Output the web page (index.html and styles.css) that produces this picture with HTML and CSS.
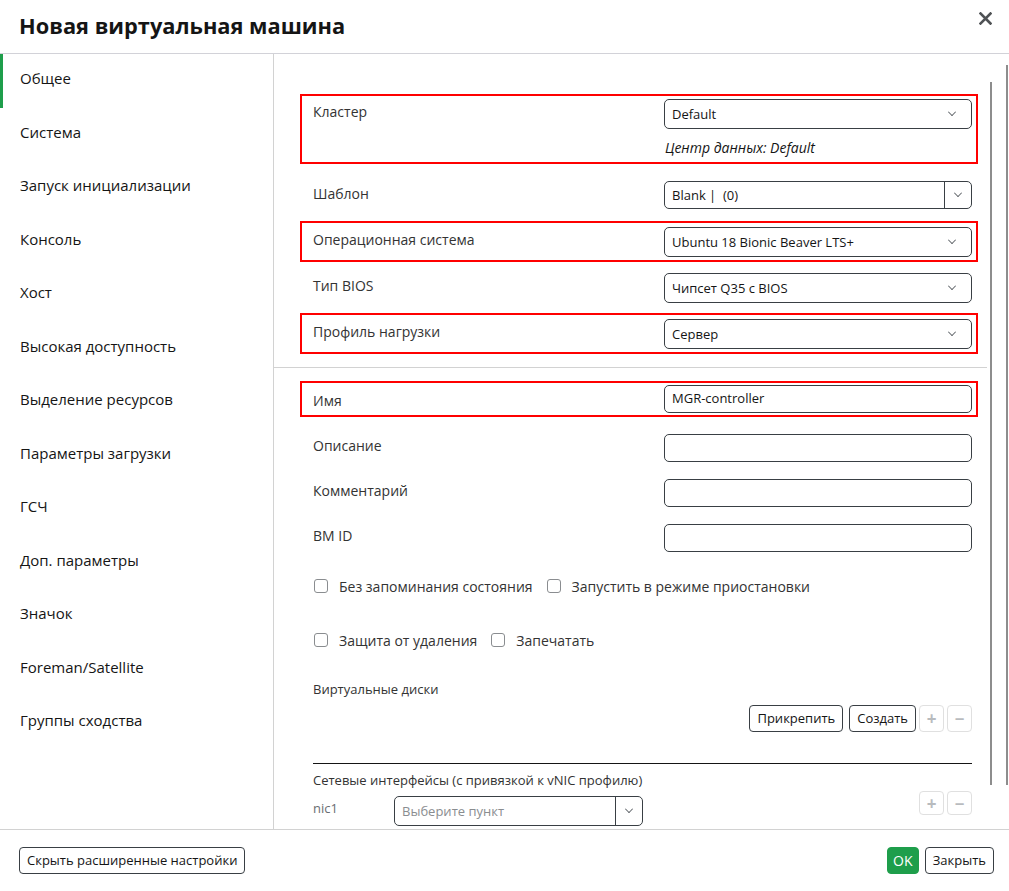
FILE: index.html
```html
<!DOCTYPE html>
<html lang="ru">
<head>
  <meta charset="UTF-8">
  <meta name="viewport" content="width=device-width, initial-scale=1.0">
  <title>Новая виртуальная машина</title>
  <link rel="stylesheet" href="styles.css">
</head>
<body>
  <div class="modal">
    <div class="modal-header">
      <h1>Новая виртуальная машина</h1>
      <button class="close" type="button" aria-label="Закрыть">
        <svg width="13" height="13" viewBox="0 0 13 13"><path d="M1.5 1.5 L11.5 11.5 M11.5 1.5 L1.5 11.5" stroke="#4f5255" stroke-width="2.6" stroke-linecap="square"/></svg>
      </button>
    </div>

    <div class="modal-body">
      <ul class="nav">
        <li class="active">Общее</li>
        <li>Система</li>
        <li>Запуск инициализации</li>
        <li>Консоль</li>
        <li>Хост</li>
        <li>Высокая доступность</li>
        <li>Выделение ресурсов</li>
        <li>Параметры загрузки</li>
        <li>ГСЧ</li>
        <li>Доп. параметры</li>
        <li>Значок</li>
        <li>Foreman/Satellite</li>
        <li>Группы сходства</li>
      </ul>

      <div class="content">
        <div class="row marked cluster">
          <label>Кластер</label>
          <div class="control">
            <div class="select"><span>Default</span><i class="chev"></i></div>
            <div class="hint">Центр данных: Default</div>
          </div>
        </div>

        <div class="row template">
          <label>Шаблон</label>
          <div class="control">
            <div class="select split"><span>Blank |&nbsp; (0)</span><b class="toggle"><i class="chev"></i></b></div>
          </div>
        </div>

        <div class="row marked">
          <label>Операционная система</label>
          <div class="control">
            <div class="select"><span>Ubuntu 18 Bionic Beaver LTS+</span><i class="chev"></i></div>
          </div>
        </div>

        <div class="row">
          <label>Тип BIOS</label>
          <div class="control">
            <div class="select"><span>Чипсет Q35 с BIOS</span><i class="chev"></i></div>
          </div>
        </div>

        <div class="row marked">
          <label>Профиль нагрузки</label>
          <div class="control">
            <div class="select"><span>Сервер</span><i class="chev"></i></div>
          </div>
        </div>

        <hr class="divider">

        <div class="row text marked name">
          <label>Имя</label>
          <div class="control"><input type="text" value="MGR-controller"></div>
        </div>
        <div class="row text">
          <label>Описание</label>
          <div class="control"><input type="text"></div>
        </div>
        <div class="row text">
          <label>Комментарий</label>
          <div class="control"><input type="text"></div>
        </div>
        <div class="row text">
          <label>BM ID</label>
          <div class="control"><input type="text"></div>
        </div>

        <div class="checks">
          <label class="check"><span class="box"></span>Без запоминания состояния</label>
          <label class="check"><span class="box"></span>Запустить в режиме приостановки</label>
        </div>
        <div class="checks">
          <label class="check"><span class="box"></span>Защита от удаления</label>
          <label class="check"><span class="box"></span>Запечатать</label>
        </div>

        <div class="section-title">Виртуальные диски</div>
        <div class="disk-actions">
          <button class="btn" type="button">Прикрепить</button>
          <button class="btn" type="button">Создать</button>
          <button class="btn icon" type="button">+</button>
          <button class="btn icon" type="button">&minus;</button>
        </div>

        <hr class="rule">

        <div class="section-title">Сетевые интерфейсы (с привязкой к vNIC профилю)</div>
        <div class="nic-row">
          <span class="nic-label">nic1</span>
          <div class="select split nic"><span>Выберите пункт</span><b class="toggle"><i class="chev"></i></b></div>
          <div class="nic-actions">
            <button class="btn icon" type="button">+</button>
            <button class="btn icon" type="button">&minus;</button>
          </div>
        </div>

        <div class="scroll-rail"></div>
      </div>
    </div>

    <div class="modal-footer">
      <button class="btn" type="button">Скрыть расширенные настройки</button>
      <div class="footer-actions">
        <button class="btn primary" type="button">OK</button>
        <button class="btn" type="button">Закрыть</button>
      </div>
    </div>
  </div>
</body>
</html>
```

FILE: styles.css
```css
* {
  box-sizing: border-box;
}

body {
  margin: 0;
  background: #ffffff;
  font-family: 'Open Sans', 'Noto Sans', sans-serif;
  color: #151515;
}

.modal {
  height: 891px;
  display: flex;
  flex-direction: column;
}

.modal-header {
  height: 54px;
  flex: none;
  border-bottom: 1px solid #d2d2d8;
  padding: 0 17px 0 19px;
  display: flex;
  align-items: center;
  justify-content: space-between;
}

.modal-header h1 {
  margin: 0 0 2px;
  font-size: 21.8px;
  font-weight: 700;
  color: #151515;
}

.close {
  border: 0;
  background: none;
  padding: 0;
  margin-top: -14px;
  cursor: pointer;
}

.modal-body {
  flex: 1;
  display: flex;
  min-height: 0;
}

/* left tabs */
.nav {
  width: 274px;
  flex: none;
  margin: 0;
  padding: 0;
  list-style: none;
  border-right: 1px solid #d2d2d2;
}

.nav li {
  height: 53.5px;
  padding: 0 0 5px 17px;
  display: flex;
  align-items: center;
  font-size: 15px;
  color: #151515;
  border-left: 3px solid transparent;
}

.nav li.active {
  border-left-color: #1e9e4b;
}

/* form column */
.content {
  flex: 1;
  position: relative;
  overflow: hidden;
  padding: 40px 37px 0 39px;
  font-size: 14px;
  color: #333333;
}

.row {
  display: flex;
  margin: 0 -6px 5px -13px;
  padding: 4px 4px 3px 11px;
  border: 2px solid transparent;
}

.row.marked {
  border-color: #ff0000;
}

.row.cluster {
  padding-top: 3px;
  margin-bottom: 11px;
}

.row.template {
  margin-bottom: 7px;
}

.row label {
  flex: 1;
  padding-top: 3px;
  color: #333333;
}

.control {
  width: 308px;
  flex: none;
}

.select {
  height: 30px;
  border: 1px solid #393f44;
  border-radius: 5px;
  display: flex;
  align-items: center;
  padding: 0 0 0 7px;
  font-size: 13px;
  color: #151515;
}

.select span {
  flex: 1;
}

.chev {
  width: 8px;
  height: 8px;
  margin-right: 15px;
  margin-top: -4px;
  border-right: 1.2px solid #393f44;
  border-bottom: 1.2px solid #393f44;
  transform: scale(0.7) rotate(45deg);
}

.select.split {
  height: 28px;
}

.toggle {
  width: 27px;
  height: 100%;
  border-left: 1px solid #393f44;
  display: flex;
  align-items: center;
  justify-content: center;
}

.toggle .chev {
  margin: -4px 0 0;
}

.hint {
  margin: 9px 0 2px 1px;
  font-style: italic;
  color: #151515;
}

.divider {
  margin: 13px -15px 13px -39px;
  border: 0;
  border-top: 1px solid #d2d2d2;
}

.row.text {
  padding-top: 2px;
  padding-bottom: 2px;
  margin-bottom: 9px;
}

.row.text label {
  padding-top: 2px;
}

.row.text.name {
  margin-bottom: 13px;
}

.row.name label {
  padding-top: 6px;
}

.row input {
  width: 100%;
  height: 28px;
  border: 1px solid #393f44;
  border-radius: 5px;
  padding: 0 7px 2px;
  font: 13px 'Open Sans', sans-serif;
  color: #151515;
}

.checks {
  display: flex;
  align-items: center;
  gap: 13px;
  height: 20px;
  margin: 20px 0 34px;
}

.checks + .checks {
  margin-top: 0;
  margin-bottom: 30px;
}

.check {
  display: flex;
  align-items: center;
  color: #333333;
}

.check .box {
  width: 14px;
  height: 14px;
  margin: 0 11px 0 1px;
  border: 1px solid #8a8d90;
  border-radius: 3px;
}

.section-title {
  font-size: 13px;
  color: #333333;
}

.disk-actions {
  display: flex;
  justify-content: flex-end;
  gap: 6px;
  margin-top: 7px;
}

.btn {
  height: 27px;
  padding: 0 7px 1px;
  border: 1px solid #393f44;
  border-radius: 4px;
  background: #ffffff;
  font: 13px 'Open Sans', sans-serif;
  color: #151515;
  cursor: pointer;
}

.btn.icon {
  width: 25px;
  padding: 0;
  border-color: #e0e0e0;
  color: #b8bbbe;
  font-size: 17px;
  font-weight: 700;
  line-height: 1;
  margin-left: -3px;
}

.disk-actions .btn.icon:first-of-type {
  margin-left: 2px;
}

.rule {
  margin: 31px 0 7px;
  border: 0;
  border-top: 1px solid #151515;
}

.nic-row {
  display: flex;
  align-items: flex-start;
  margin-top: 7px;
}

.nic-label {
  width: 81px;
  color: #6a6e73;
  font-size: 13px;
  padding-top: 3px;
}

.select.nic {
  width: 249px;
  height: 30px;
  color: #8a8d90;
}

.nic .toggle {
  width: 27px;
}

.nic-actions {
  margin-left: auto;
  margin-top: -5px;
  display: flex;
  gap: 3px;
}

.nic-actions .btn.icon {
  height: 24px;
  margin-left: 0;
}

/* scrollbar track on the right edge */
.scroll-rail {
  position: absolute;
  top: 11px;
  right: 1px;
  width: 18px;
  height: 720px;
  border-left: 2px solid #8d8d8d;
  border-right: 2px solid #8d8d8d;
}

.scroll-rail::before {
  content: "";
  position: absolute;
  left: -2px;
  top: 0;
  width: 2px;
  height: 17px;
  background: #ffffff;
}

/* bottom bar */
.modal-footer {
  height: 62px;
  flex: none;
  border-top: 1px solid #d2d2d2;
  padding: 0 15px 0 19px;
  display: flex;
  align-items: center;
  justify-content: space-between;
}

.footer-actions {
  display: flex;
  gap: 6px;
}

.btn.primary {
  width: 32px;
  padding: 0;
  border-color: #1e9e4b;
  background: #1e9e4b;
  color: #ffffff;
  font-size: 14px;
}
```
